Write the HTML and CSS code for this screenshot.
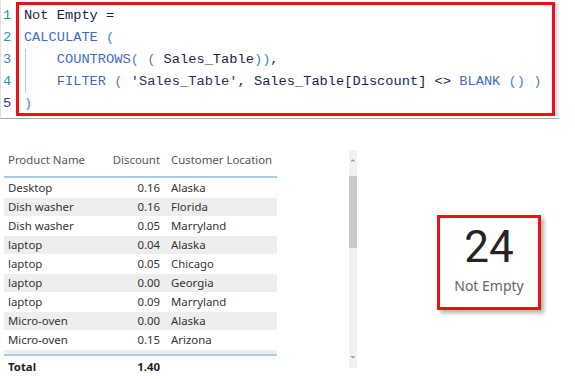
FILE: index.html
```html
<!DOCTYPE html>
<html>
<head>
<meta charset="utf-8">
<link rel="stylesheet" href="styles.css">
</head>
<body>
<div class="editor">
  <div class="gutter">
    <div class="ln">1</div>
    <div class="ln">2</div>
    <div class="ln">3</div>
    <div class="ln">4</div>
    <div class="ln cur">5</div>
  </div>
  <div class="code">
    <div class="line">Not Empty =</div>
    <div class="line"><span class="kw">CALCULATE</span> <span class="p">(</span></div>
    <div class="line guide">    <span class="kw">COUNTROWS</span><span class="p">(</span> <span class="p">(</span> Sales_Table<span class="p">))</span>,</div>
    <div class="line guide">    <span class="kw">FILTER</span> <span class="p">(</span> <span class="str">'Sales_Table'</span>, Sales_Table[Discount] &lt;&gt; <span class="kw">BLANK</span> <span class="p">()</span> <span class="p">)</span></div>
    <div class="line"><span class="p">)</span></div>
  </div>
  <div class="shade"></div>
</div>

<div class="lower">
  <div class="visual">
    <div class="table">
      <div class="row head">
        <span class="c1">Product Name</span><span class="c2">Discount</span><span class="c3">Customer Location</span>
      </div>
      <div class="body">
        <div class="row"><span class="c1">Desktop</span><span class="c2">0.16</span><span class="c3">Alaska</span></div>
        <div class="row alt"><span class="c1">Dish washer</span><span class="c2">0.16</span><span class="c3">Florida</span></div>
        <div class="row"><span class="c1">Dish washer</span><span class="c2">0.05</span><span class="c3">Marryland</span></div>
        <div class="row alt"><span class="c1">laptop</span><span class="c2">0.04</span><span class="c3">Alaska</span></div>
        <div class="row"><span class="c1">laptop</span><span class="c2">0.05</span><span class="c3">Chicago</span></div>
        <div class="row alt"><span class="c1">laptop</span><span class="c2">0.00</span><span class="c3">Georgia</span></div>
        <div class="row"><span class="c1">laptop</span><span class="c2">0.09</span><span class="c3">Marryland</span></div>
        <div class="row alt"><span class="c1">Micro-oven</span><span class="c2">0.00</span><span class="c3">Alaska</span></div>
        <div class="row"><span class="c1">Micro-oven</span><span class="c2">0.15</span><span class="c3">Arizona</span></div>
        <div class="row alt"><span class="c1">Micro-oven</span><span class="c2">0.07</span><span class="c3">Georgia</span></div>
      </div>
      <div class="row total"><span class="c1">Total</span><span class="c2">1.40</span><span class="c3"></span></div>
    </div>
    <div class="scroll">
      <div class="arrow">&#8963;</div>
      <div class="thumb"></div>
      <div class="track"></div>
      <div class="arrow down">&#8964;</div>
    </div>
  </div>
  <div class="card">
    <div class="value">24</div>
    <div class="label">Not Empty</div>
  </div>
</div>
</body>
</html>
```

FILE: styles.css
```css
html, body {
  margin: 0;
  padding: 0;
  background: #ffffff;
}

.editor {
  display: flex;
  width: 558px;
  height: 118px;
  border-bottom: 1px solid #a8a8a8;
  border-left: 1px solid #e0e0e0;
  box-sizing: content-box;
}

.gutter {
  width: 15px;
  padding-top: 5px;
  font-family: "Liberation Mono", monospace;
  font-size: 13.7px;
}

.ln {
  height: 22px;
  line-height: 22px;
  padding-left: 2px;
  color: #2b91af;
}

.ln.cur {
  color: #3b3b8a;
}

.code {
  margin-top: 2px;
  width: 532px;
  height: 108px;
  border: 3px solid #ee1111;
  padding: 0 0 0 5px;
  font-family: "Liberation Mono", monospace;
  font-size: 13.7px;
  color: #1e1e4e;
}

.shade {
  margin-top: 4px;
  width: 4px;
  height: 112px;
  background: linear-gradient(to right, #d8d8d8, #f2f2f2);
}

.line {
  height: 22px;
  line-height: 22px;
  position: relative;
  white-space: pre;
}

.guide::before {
  content: "";
  position: absolute;
  left: 1px;
  top: 0;
  bottom: 0;
  border-left: 1px solid #c8c8c8;
}

.kw {
  color: #3d6cc4;
}

.p {
  color: #4a86c8;
}

.str {
  color: #2b2b6b;
}

.lower {
  display: flex;
  align-items: flex-start;
  padding-top: 31px;
}

.visual {
  margin-left: 4px;
  width: 353px;
  display: flex;
  justify-content: space-between;
  font-family: "Noto Sans", "Open Sans", sans-serif;
  font-size: 11.4px;
  color: #333333;
}

.table {
  width: 273px;
}

.row {
  display: flex;
  height: 19px;
  line-height: 19px;
  white-space: nowrap;
}

.row.alt {
  background: #eeeeee;
  border-top: 1px solid #ffffff;
  box-sizing: border-box;
  line-height: 17px;
}

.c1 {
  width: 103px;
  padding-left: 4px;
}

.c2 {
  width: 49px;
  text-align: right;
}

.c3 {
  padding-left: 11px;
}

.head {
  height: 26px;
  color: #555555;
  border-bottom: 2px solid #a6cdee;
}

.body {
  height: 176px;
  overflow: hidden;
}

.total {
  border-top: 2px solid #a6cdee;
  height: 21px;
  line-height: 21px;
  font-weight: 700;
  color: #222222;
}

.scroll {
  width: 8px;
  height: 218px;
  display: flex;
  flex-direction: column;
  background: #f1f1f1;
}

.arrow {
  height: 26px;
  font-size: 9px;
  line-height: 26px;
  text-align: center;
  color: #666666;
}

.thumb {
  height: 72px;
  background: #c9c9c9;
}

.track {
  flex: 1;
}

.card {
  margin-left: 80px;
  margin-top: 65px;
  width: 98px;
  height: 89px;
  border: 3px solid #ee1111;
  box-shadow: 3px 3px 4px rgba(0, 0, 0, 0.3);
  display: flex;
  flex-direction: column;
  align-items: center;
  background: #ffffff;
}

.value {
  margin-top: 5px;
  font-family: "Roboto", "DejaVu Sans", sans-serif;
  font-size: 44px;
  line-height: 48px;
  color: #252525;
}

.label {
  margin-top: 6px;
  font-family: "Noto Sans", "Open Sans", sans-serif;
  font-size: 14px;
  line-height: 18px;
  color: #666666;
}
```
